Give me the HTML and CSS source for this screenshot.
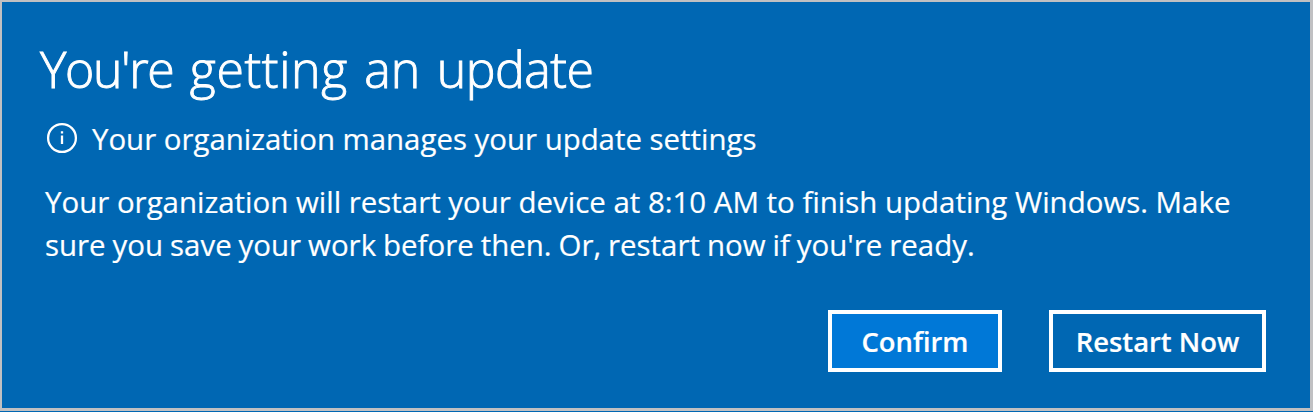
FILE: index.html
```html
<!DOCTYPE html>
<html lang="en">
<head>
<meta charset="utf-8">
<title>You're getting an update</title>
<link rel="stylesheet" href="styles.css">
</head>
<body>
<main class="dialog">
  <h1 class="title"><span class="tight">You're</span> <span class="wide">getting</span> an <span class="last">update</span></h1>
  <div class="notice">
    <svg class="info" viewBox="0 0 32 32" aria-hidden="true"><circle cx="16" cy="16" r="13.9"/><path d="M16 13.5v8.5M16 9.2v2.3"/></svg>
    <span class="notice-text">Your organization manages your update settings</span>
  </div>
  <p class="message"><span class="line first">Your organization will restart your device at 8:10 AM to finish updating Windows. Make</span> <span class="line second">sure you save your work before then. Or, restart now if you're ready.</span></p>
  <div class="actions">
    <button class="button primary">Confirm</button>
    <button class="button restart">Restart Now</button>
  </div>
</main>
</body>
</html>
```
FILE: styles.css
```css
* { box-sizing: border-box; }
body { margin: 0; height: 412px; background: #0067b3; }
.dialog {
  width: 1313px;
  height: 411px;
  padding: 37px 44px 0 38px;
  overflow: hidden;
  border: 2px solid #c0c0c2;
  border-right-width: 3px;
  border-bottom-width: 3px;
  background: #0067b3;
  color: #fff;
  font-family: "Open Sans", "Noto Sans", sans-serif;
  -webkit-text-stroke: 0.2px #fff;
}
.title { margin: 0; height: 60px; font-size: 50px; line-height: 60px; font-weight: 300; white-space: nowrap; word-spacing: 3.5px; -webkit-text-stroke: 0.9px #fff; }
.tight { letter-spacing: -1.4px; }
.wide { letter-spacing: 0.6px; }
.last { letter-spacing: -0.5px; }
.notice { display: flex; align-items: center; height: 42px; margin-top: 19px; padding-left: 6px; gap: 14px; font-size: 29.4px; white-space: nowrap; }
.info { width: 32px; height: 32px; margin-top: -3px; fill: none; stroke: #fff; stroke-width: 2.3; }
.message { margin: 21px 0 0 5px; font-size: 29.45px; line-height: 43px; white-space: nowrap; }
.line { display: block; width: max-content; }
.second { word-spacing: -0.7px; }
.actions { display: flex; justify-content: flex-end; gap: 47px; margin-top: 43px; }
.button { height: 62px; width: 174px; padding: 2px 0 0; border: 4px solid #fff; background: #0067b3; color: #fff; font: 600 27.4px/50px "Open Sans", sans-serif; white-space: nowrap; }
.primary { background: #0078d7; }
.restart { width: 217px; }
```
